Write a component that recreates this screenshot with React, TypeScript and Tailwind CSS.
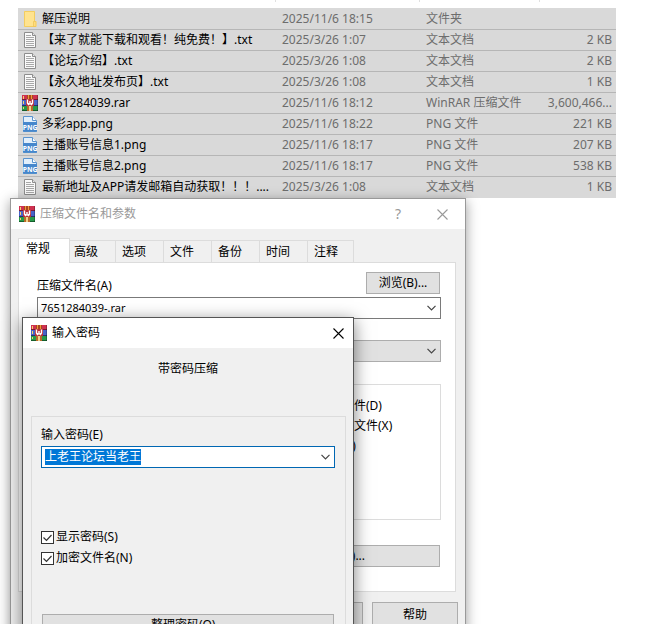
import { useEffect, useRef } from "react";
import type { ReactNode } from "react";

type Kind = "folder" | "text" | "rar" | "png";

interface FileEntry {
  kind: Kind;
  name: string;
  date: string;
  type: string;
  size: string;
}

const files: FileEntry[] = [
  { kind: "folder", name: "解压说明", date: "2025/11/6 18:15", type: "文件夹", size: "" },
  { kind: "text", name: "【来了就能下载和观看！纯免费！】.txt", date: "2025/3/26 1:07", type: "文本文档", size: "2 KB" },
  { kind: "text", name: "【论坛介绍】.txt", date: "2025/3/26 1:08", type: "文本文档", size: "2 KB" },
  { kind: "text", name: "【永久地址发布页】.txt", date: "2025/3/26 1:08", type: "文本文档", size: "1 KB" },
  { kind: "rar", name: "7651284039.rar", date: "2025/11/6 18:12", type: "WinRAR 压缩文件", size: "3,600,466..." },
  { kind: "png", name: "多彩app.png", date: "2025/11/6 18:22", type: "PNG 文件", size: "221 KB" },
  { kind: "png", name: "主播账号信息1.png", date: "2025/11/6 18:17", type: "PNG 文件", size: "207 KB" },
  { kind: "png", name: "主播账号信息2.png", date: "2025/11/6 18:17", type: "PNG 文件", size: "538 KB" },
  { kind: "text", name: "最新地址及APP请发邮箱自动获取！！！....", date: "2025/3/26 1:08", type: "文本文档", size: "1 KB" },
];

const tabs = ["高级", "选项", "文件", "备份", "时间", "注释"];

function RarIcon() {
  return (
    <svg viewBox="0 0 16 16" className="size-4 shrink-0" aria-hidden="true">
      <rect x="0" y="0" width="16" height="5" fill="#cf3150" />
      <rect x="0" y="4" width="16" height="1" fill="#7d1a35" />
      <rect x="0" y="5" width="16" height="5" fill="#4763c8" />
      <rect x="0" y="10" width="16" height="1" fill="#2a2f70" />
      <rect x="0" y="11" width="16" height="4" fill="#279a4a" />
      <rect x="0" y="15" width="16" height="1" fill="#14602c" />
      <path d="M1.5 1v3M1.5 6v3M1.5 12v2" stroke="#f2d36b" />
      <path d="M15.5 0v16" stroke="#000" strokeOpacity=".25" />
      <rect x="5" y="0" width="6" height="5" fill="#a8461f" />
      <rect x="6" y="0" width="1" height="4" fill="#f09a3a" />
      <rect x="9" y="0" width="1" height="4" fill="#f09a3a" />
      <rect x="5" y="10" width="6" height="6" fill="#b8692a" />
      <rect x="7" y="11" width="2" height="5" fill="#f0d28a" />
      <rect x="4" y="4" width="8" height="7" fill="#b83038" />
      <path d="M5.5 4.5v3.5l1 1.5 1.5-1 1.5 1 1-1.5v-3.5M8 6v2.5" fill="none" stroke="#fff" strokeWidth="1.4" />
    </svg>
  );
}

function FileIcon({ kind }: { kind: Kind }) {
  if (kind === "rar") return <RarIcon />;
  if (kind === "folder") {
    return (
      <svg viewBox="0 0 16 16" className="size-4 shrink-0" aria-hidden="true">
        <path d="M2 0h11v10h1.5v6H2z" fill="#ffe38f" />
        <path d="M2.5 .5h10v10M2.5 .5v15h11" fill="none" stroke="#f3cd60" />
        <path d="M11.5 10.5h2.5v5h-2.5z" fill="#ffdd7c" stroke="#eec255" strokeWidth=".7" />
      </svg>
    );
  }
  if (kind === "png") {
    return (
      <svg viewBox="0 0 16 16" className="size-4 shrink-0" aria-hidden="true">
        <path d="M1.5.5h9l4 4v11h-13z" fill="#e2effb" stroke="#5b94cf" />
        <path d="M10.5.5v4h4" fill="#fff" stroke="#5b94cf" />
        <rect x="1" y="6" width="14" height="9.5" fill="#4687cc" />
        <text x="8" y="13.5" textAnchor="middle" fontSize="6.8" fontWeight="700" fill="#fff">PNG</text>
      </svg>
    );
  }
  return (
    <svg viewBox="0 0 16 16" className="size-4 shrink-0" aria-hidden="true">
      <path d="M2.5.5h8l3 3v12h-11z" fill="#fafafa" stroke="#8d8d8d" />
      <path d="M10.5.5v3h3" fill="#e6e6e6" stroke="#8d8d8d" />
      <path d="M4 3.5h5M4 5.5h8M4 7.5h8M4 9.5h8M4 11.5h8M4 13.5h8" stroke="#a8a8a8" />
    </svg>
  );
}

function Chevron() {
  return (
    <svg viewBox="0 0 9 6" className="h-[6px] w-[9px]" fill="none" stroke="#444" strokeWidth="1.2" aria-hidden="true">
      <path d="M.5.8 4.5 4.8 8.5.8" />
    </svg>
  );
}

function CloseIcon() {
  return (
    <svg viewBox="0 0 11 11" className="size-[11px]" fill="none" stroke="currentColor" strokeWidth="1.1" aria-hidden="true">
      <path d="M.5.5l10 10M10.5.5l-10 10" />
    </svg>
  );
}

function Check({ label }: { label: string }) {
  return (
    <label className="flex items-center gap-[2px]">
      <span className="grid size-[13px] shrink-0">
        <input type="checkbox" defaultChecked className="peer col-start-1 row-start-1 size-[13px] appearance-none border border-[#333] bg-white" />
        <svg viewBox="0 0 13 13" className="pointer-events-none invisible col-start-1 row-start-1 size-[13px] peer-checked:visible" fill="none" stroke="#333" strokeWidth="1.2" aria-hidden="true">
          <path d="M2.5 6.5l3 3 5-5.5" />
        </svg>
      </span>
      {label}
    </label>
  );
}

function Option({ label }: { label: string }) {
  return (
    <label className="flex h-5 items-center gap-[2px]">
      <input type="checkbox" className="size-[13px] shrink-0 appearance-none border border-[#333] bg-white" />
      {label}
    </label>
  );
}

function PushButton({ children, className = "" }: { children: ReactNode; className?: string }) {
  return (
    <button type="button" className={`border border-[#adadad] bg-[#e1e1e1] text-center ${className}`}>
      {children}
    </button>
  );
}

function FileList() {
  return (
    <div className="pr-[41px] pl-[18px]">
      <div className="flex h-2 items-start">
        <span className="h-[2px] w-[258px] border-r border-[#e0e0e0]" />
        <span className="h-[2px] w-36 border-r border-[#e0e0e0]" />
        <span className="h-[2px] w-[120px] border-r border-[#e0e0e0]" />
      </div>
      <table className="w-full table-fixed border-separate border-spacing-0 border-t border-[#d9d9d9] bg-[#d9d9d9] text-xs leading-4">
        <colgroup>
          <col />
          <col className="w-36" />
          <col className="w-[110px]" />
          <col className="w-20" />
        </colgroup>
        <tbody>
          {files.map((f) => (
            <tr key={f.name} className="text-[#6d6d6d] *:h-[21px] *:border-b *:border-[#b6b6b6] *:p-0 last:*:border-[#d9d9d9]">
              <td className="text-black">
                <span className="flex items-center gap-1 pl-1 whitespace-nowrap">
                  <FileIcon kind={f.kind} />
                  {f.name}
                </span>
              </td>
              <td>{f.date}</td>
              <td className="whitespace-nowrap">{f.type}</td>
              <td className="pr-1! text-right">{f.size}</td>
            </tr>
          ))}
        </tbody>
      </table>
    </div>
  );
}

function ArchiveDialog() {
  return (
    <section aria-label="压缩文件名和参数" className="absolute top-[198px] left-[10px] w-[456px] border border-[#999] bg-[#f0f0f0] shadow-[0_3px_12px_rgba(0,0,0,0.4)]">
      <header className="flex h-[30px] items-center bg-white pr-[17px] pl-2 text-[#999]">
        <RarIcon />
        <h1 className="ml-[5px] flex-1">压缩文件名和参数</h1>
        <button type="button" aria-label="Help" className="mr-9 text-sm">?</button>
        <button type="button" aria-label="Close"><CloseIcon /></button>
      </header>
      <div className="px-[7px] pt-[9px]">
        <div role="tablist" className="flex items-end">
          <button type="button" role="tab" aria-selected="true" className="z-10 -mb-px h-[25px] w-[52px] border border-b-0 border-[#dcdcdc] bg-white pb-1 pl-[7px] text-left">
            常规
          </button>
          {tabs.map((t) => (
            <button key={t} type="button" role="tab" aria-selected="false" className="h-[22px] w-12 border-t border-r border-[#dcdcdc] pl-1.5 text-left nth-2:w-[46px] nth-2:pl-1 last:w-[46px]">
              {t}
            </button>
          ))}
        </div>
        <div role="tabpanel" className="mr-[2px] flex h-[330px] flex-col border border-[#dcdcdc] bg-white pt-[9px] pr-[14px] pl-[18px]">
          <div className="flex items-end justify-between">
            <label htmlFor="archive">压缩文件名(A)</label>
            <PushButton className="mr-px h-[22px] w-[74px]">浏览(B)...</PushButton>
          </div>
          <div className="mt-[3px] flex h-[22px] items-center border border-[#7a7a7a] bg-white pr-1">
            <input id="archive" defaultValue="7651284039-.rar" className="min-w-0 flex-1 bg-transparent pl-[3px] text-[11px] outline-none" />
            <button type="button" aria-label="Open list"><Chevron /></button>
          </div>
          <div className="mt-[21px] flex h-[22px] items-center border border-[#adadad] bg-[#e1e1e1] pr-1">
            <select aria-label="Profile" disabled className="min-w-0 flex-1 appearance-none" />
            <Chevron />
          </div>
          <fieldset className="mt-[22px] h-[136px] w-[214px] self-end border border-[#dcdcdc] pt-[11px] pl-[3px]">
            <Option label="压缩后删除原来的文件(D)" />
            <Option label="创建自解压格式压缩文件(X)" />
            <Option label="创建固实压缩文件(S)" />
          </fieldset>
          <PushButton className="mt-[25px] mr-px h-[22px] w-[222px] self-end">设置密码(P)...</PushButton>
        </div>
        <footer className="mt-[10px] flex justify-end gap-[9px] pb-2">
          <PushButton className="h-[26px] w-[86px]">取消</PushButton>
          <PushButton className="h-[26px] w-[86px]">帮助</PushButton>
        </footer>
      </div>
    </section>
  );
}

function PasswordDialog() {
  const field = useRef<HTMLInputElement>(null);

  useEffect(() => {
    field.current?.focus({ preventScroll: true });
    field.current?.select();
  }, []);

  return (
    <section aria-label="输入密码" className="absolute top-[317px] left-[22px] w-[332px] border border-[#555] bg-[#f0f0f0] shadow-[0_4px_16px_rgba(0,0,0,0.5)]">
      <header className="flex h-[30px] items-center bg-white pr-[9px] pl-2">
        <RarIcon />
        <h2 className="ml-[5px] flex-1">输入密码</h2>
        <button type="button" aria-label="Close"><CloseIcon /></button>
      </header>
      <p className="pt-[13px] text-center">带密码压缩</p>
      <div className="mt-[39px] mr-[7px] ml-2 flex flex-col border border-[#dcdcdc] pt-[10px] pr-[10px] pb-4 pl-[9px]">
        <label htmlFor="password">输入密码(E)</label>
        <div className="mt-[3px] flex h-[22px] items-center border border-[#0067b3] bg-white pr-1">
          <input id="password" ref={field} defaultValue="上老王论坛当老王" className="min-w-0 flex-1 bg-transparent pl-[3px] outline-none selection:bg-[#0078d7] selection:text-white" />
          <button type="button" aria-label="Open list"><Chevron /></button>
        </div>
        <div className="mt-[61px] flex flex-col gap-[5px]">
          <Check label="显示密码(S)" />
          <Check label="加密文件名(N)" />
        </div>
        <PushButton className="mx-px mt-12 h-[22px]">整理密码(O)...</PushButton>
      </div>
    </section>
  );
}

export default function App() {
  return (
    <main className="relative h-screen overflow-hidden bg-white font-['Noto_Sans','Noto_Sans_CJK_SC',sans-serif] text-xs leading-4 text-black">
      <FileList />
      <ArchiveDialog />
      <PasswordDialog />
    </main>
  );
}
